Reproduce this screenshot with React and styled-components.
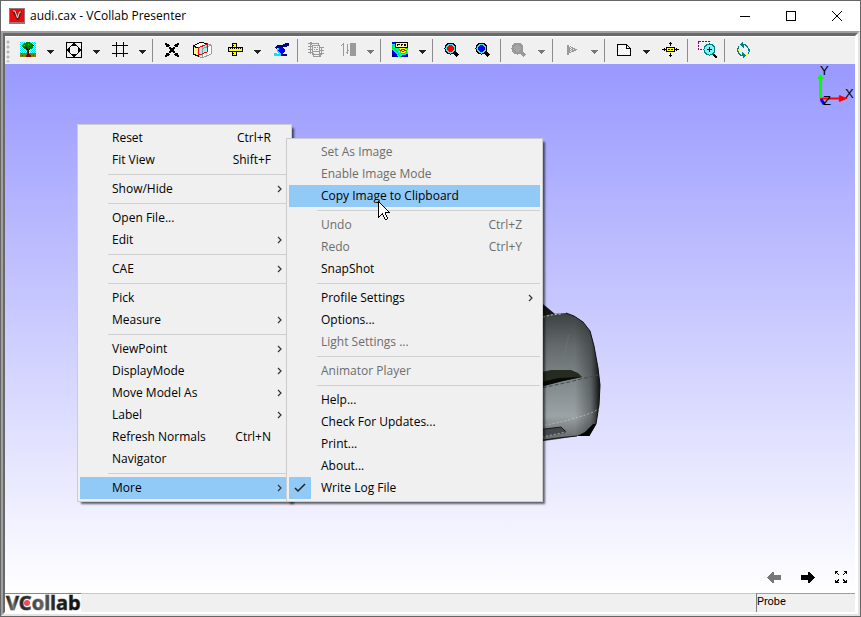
import React from "react";
import styled, { createGlobalStyle } from "styled-components";

const GlobalStyle = createGlobalStyle`
  *, *::before, *::after { box-sizing: border-box; }
  body { margin: 0; background: #fff; }
  button { margin: 0; padding: 0; border: 0; background: none; color: inherit; font: inherit; }
`;

const Window = styled.div`
  display: flex;
  flex-direction: column;
  min-height: 100vh;
  border: 1px solid #666;
  background: #fff;
  color: #000;
  font: 12px/16px "Open Sans", "Noto Sans", sans-serif;
`;

const TitleBar = styled.header`
  display: flex;
  align-items: center;
  height: 30px;
  padding-left: 8px;
`;

const Title = styled.h1`
  flex: 1;
  margin: 0 0 0 5px;
  font-size: 12px;
  font-weight: 400;
`;

const CaptionButton = styled.button`
  display: grid;
  place-items: center;
  width: 46px;
  height: 30px;
`;

const Frame = styled.div`
  flex: 1;
  display: flex;
  flex-direction: column;
  border: 2px solid;
  border-color: #a0a0a0 #e3e3e3 #e3e3e3 #a0a0a0;
`;

const Inner = styled.div`
  flex: 1;
  display: flex;
  flex-direction: column;
  border-style: solid;
  border-width: 3px 3px 2px 2px;
  border-color: #696969 #fff #fff #696969;
`;

const Toolbar = styled.div`
  display: flex;
  height: 28px;
  background: #f0f0f0;
  border-top: 1px solid #fff;
`;

const Grip = styled.div`
  width: 9px;
  margin: 3px 0 2px;
  background: radial-gradient(circle at 3px 2px, #b8b8b8 1px, transparent 2px) 0 0 / 9px 5px;
`;

const Group = styled.div`
  display: flex;
  align-items: flex-start;
  padding: 0 ${(p) => p.$end || 0}px 0 ${(p) => p.$start || 0}px;
`;

const Separator = styled.div`
  width: 1px;
  margin: 2px 0;
  background: #8c8c8c;
`;

const Tool = styled.button`
  display: flex;
  align-items: center;
  justify-content: center;
  width: ${(p) => p.$w || 28}px;
  height: 25px;
  margin-left: ${(p) => p.$gap || 0}px;
`;

const DropButton = styled.button`
  display: flex;
  align-items: center;
  width: 18px;
  height: 25px;
  padding: 4px 0 0 5px;
  color: ${(p) => (p.disabled ? "#777" : "#222")};
`;

const Viewport = styled.main`
  position: relative;
  flex: 1;
  min-height: 480px;
  overflow: hidden;
  background: linear-gradient(#9999ff, #ffffff);
`;

const CarLayer = styled.div`
  position: absolute;
  left: 532px;
  top: 236px;
`;

const AxisLayer = styled.div`
  position: absolute;
  top: 0;
  right: 0;
`;

const NavLayer = styled.div`
  position: absolute;
  right: 8px;
  bottom: 7px;
  display: flex;
  align-items: center;
  gap: 20px;
`;

const NavButton = styled.button`
  display: grid;
  place-items: center;
  height: 18px;
`;

const Menu = styled.div`
  position: absolute;
  left: ${(p) => p.$left}px;
  top: ${(p) => p.$top}px;
  width: ${(p) => p.$width}px;
  padding: 2px;
  border: 1px solid #ccc;
  background: #f0f0f0;
  box-shadow: 3px 3px 2px -1px rgba(0, 0, 0, 0.6);
`;

const Item = styled.button`
  display: grid;
  grid-template-columns: 22px 1fr auto 18px;
  align-items: center;
  width: 100%;
  height: 22px;
  text-align: left;
  white-space: nowrap;
  color: ${(p) => (p.disabled ? "#6d6d6d" : "#000")};
  background: ${(p) => (p.$active ? "#91c9f7" : "transparent")};
`;

const CheckCell = styled.span`
  display: grid;
  place-items: center;
  height: 22px;
  background: ${(p) => (p.$checked ? "#91c9f7" : "transparent")};
`;

const ItemLabel = styled.span`
  padding-left: 10px;
`;

const ArrowCell = styled.span`
  display: grid;
  place-items: center;
`;

const MenuRule = styled.hr`
  height: 1px;
  margin: 3px 0 3px 28px;
  border: 0;
  background: #d0d0d0;
`;

const CursorLayer = styled.div`
  position: absolute;
  left: 373px;
  top: 137px;
  pointer-events: none;
`;

const StatusBar = styled.footer`
  display: flex;
  height: 19px;
  background: #f0f0f0;
`;

const LogoCell = styled.div`
  width: 76px;
  height: 19px;
  background: #fff;
`;

const StatusMessage = styled.div`
  flex: 1;
  border-top: 1px solid #c8c8c8;
`;

const ProbeCell = styled.div`
  width: 99px;
  border-top: 1px solid #a0a0a0;
  border-left: 1px solid #808080;
  font: 11px/15px Roboto, "Liberation Sans", sans-serif;
`;

const Svg = styled.svg`
  display: block;
  flex: none;
`;

const LogoSvg = styled(Svg)`
  overflow: visible;
`;

const palette = {
  k: "#000", w: "#fff", r: "#f00", c: "#00e8f0", b: "#0000f0", n: "#000080", g: "#008000",
  m: "#800000", o: "#808000", y: "#ff0", l: "#00f000", e: "#9a9a9a", d: "#777", t: "#008080", p: "#800080",
  u: "#fff8a0", s: "#b8f4f4",
};

function Pixels({ rows }) {
  const cells = [];
  rows.forEach((row, y) => {
    let x = 0;
    while (x < row.length) {
      let end = x + 1;
      while (end < row.length && row[end] === row[x]) end += 1;
      if (row[x] !== ".") {
        cells.push(<rect key={`${x}-${y}`} x={x} y={y} width={end - x} height={1} fill={palette[row[x]]} />);
      }
      x = end;
    }
  });
  return (
    <Svg width={rows[0].length} height={rows.length} shapeRendering="crispEdges" aria-hidden="true">
      {cells}
    </Svg>
  );
}

const art = {
  tree: [
    "cwcwcwggggcwcwcw",
    "wcwcggggggggwcwc",
    "cwcggggglggggwcw",
    "wcgglggggggggkwc",
    "cwgggggggkgggwcw",
    "wcwggkmggggggcwc",
    "cwcwggmmgmggcwcw",
    "wcwcwcmmmmwcwcwc",
    "cwcwcwcmmwcwcwcw",
    "wcwcwcwmmcwcwcwc",
    "cwcwcwcmmwcwcwcw",
    "ooooooommooooooo",
    "ooooooommmoooooo",
    "oogooommmmmoogoo",
    "oooooommmmmooooo",
  ],
  fit: [
    "kkkkkkkkkkkkkkkk",
    "k......kk......k",
    "k.....kkkk.....k",
    "k....kkkkkk....k",
    "k...k......k...k",
    "k..k........k..k",
    "k.kk........kk.k",
    "kkkk........kkkk",
    "kkkk........kkkk",
    "k.kk........kk.k",
    "k..k........k..k",
    "k...k......k...k",
    "k....kkkkkk....k",
    "k.....kkkk.....k",
    "k......kk......k",
    "kkkkkkkkkkkkkkkk",
  ],
  grid: [
    "....k......k....",
    "....k......k....",
    "....k......k....",
    "kkkkkkkkkkkkkkkk",
    "....k......k....",
    "....k......k....",
    "....k......k....",
    "....k......k....",
    "....k......k....",
    "....k......k....",
    "....k......k....",
    "kkkkkkkkkkkkkkkk",
    "....k......k....",
    "....k......k....",
    "....k......k....",
  ],
  cross: [
    "kk..........kk",
    "kkkk......kkkk",
    ".kkkk....kkkk.",
    ".kkk......kkk.",
    "....kk..kk....",
    "....kkkkkk....",
    ".....kkkk.....",
    ".....kkkk.....",
    "....kkkkkk....",
    "....kk..kk....",
    ".kkk......kkk.",
    ".kkkk....kkkk.",
    "kkkk......kkkk",
    "kk..........kk",
  ],
  ruler: [
    "....kkkkk......",
    "....kyyyk......",
    "....kkyyk......",
    "....kyyyk......",
    "kkkkkkkkkkkkkkk",
    "kykykykykykykyk",
    "kyyyyyyyyyyyyyk",
    "kyyyyyyyyyyyyyk",
    "kkkkkkkkkkkkkkk",
    "....kyyyk......",
    "....kkyyk......",
    "....kyyyk......",
    "....kkkkk......",
  ],
  lamp: [
    "...........nnnn",
    ".........nnnnnn",
    "...nnnnnnnnnnnn",
    "..nnnnnnnnnnn..",
    ".nnnnnnnn......",
    "..n.cbbbbb.....",
    "...ccbbbbbb....",
    "...cbbbbbbb....",
    "...ccbbbbbb....",
    "....ccbbbb.....",
    "ccc..ccbb......",
    "cccccccnnnnnn..",
    "cccccccnnnnnn..",
  ],
  frame: [
    "..ee............",
    "eeeeeeeeeee.....",
    "..ee......e.....",
    "..e.eeeeeeee....",
    "eeeee......e....",
    "..e.e.ee.e.eeeee",
    "..e.e......e.e..",
    "eeeee.e.ee.e.e..",
    "..e.e......eeeee",
    "..e.eeeeeeee.e..",
    "eeeee......e.e..",
    "..e.ee.....eeeee",
    "....eeeeeeeeee..",
    ".....e.....ee...",
    ".....eeeeeeee...",
  ],
  levels: [
    "..e......eeeeee",
    ".ee...e..eeeeee",
    "e.e...e..eeeeee",
    "..e...e..eeeeee",
    "..e...e..eeeeee",
    "..e...e..eeeeee",
    "..e...e..eeeeee",
    "..e...ee.eeeeee",
    "..e...e..eeeeee",
    "..e..ee..eeeeee",
    "..e...e..eeeeee",
    "..e......eeeeee",
    "..e......eeeeee",
  ],
  fringe: [
    "bbbkkkkkkkkkkkkk",
    "bbbkuuuuuuuuuuuk",
    "ccckukkkukkukkuk",
    "lllkukuuukuukkuk",
    "lcckuuuuuuuuuuuk",
    "lcckkkkkkkkkkkkk",
    "lllccclyyyyyylll",
    "ccllccclyrrrryyl",
    "bccllcclrryyrrly",
    "bbccllcylyrryyly",
    "bbbcclcclyyyyllc",
    "nbbbcclccllllccc",
    "nnbbbclcccccccbb",
    "nnnbbcclccbbbbbb",
    "nnnnbbcclbbbbbbb",
  ],
  play: [
    "ee........",
    "ee.e......",
    "eee.ee....",
    "eeee.eee..",
    "eee.ee.eee",
    "eeee.eeee.",
    "eee.eee...",
    "eeee......",
    "ee........",
    "ee........",
  ],
  pan: [
    "........k........",
    ".......kkk.......",
    "........k........",
    "........k........",
    ".................",
    "....kkkkkkkkk....",
    "..k.kuyuyuyuk.k..",
    "kkkkkykkykkykkkkk",
    "..k.kuyuyuyuk.k..",
    "....kkkkkkkkk....",
    ".................",
    "........k........",
    "........k........",
    ".......kkk.......",
    "........k........",
  ],
  note: [
    "kkkkkkkkkk....",
    "kuwuwuwuwkk...",
    "kwuwuwuwukuk..",
    "kuwuwuwuwkwuk.",
    "kwuwuwuwukkkkk",
    "kuwuwuwuwuwuwk",
    "kwuwuwuwuwuwuk",
    "kuwuwuwuwuwuwk",
    "kwuwuwuwuwuwuk",
    "kuwuwuwuwuwuwk",
    "kwuwuwuwuwuwuk",
    "kkkkkkkkkkkkkk",
  ],
  refresh: [
    ".....t.......",
    "....tt.......",
    "...tttttt....",
    "..yyttt.tt...",
    ".ty..tt..tt..",
    ".t....t...ty.",
    "tt.........t.",
    "ty.........tt",
    "ty.........tt",
    "tt.........yt",
    ".t...t.....t.",
    ".tt..tty..yt.",
    "..tt.tttyyy..",
    "...tttttt....",
    "......tt.....",
    "......t......",
  ],
  cursor: [
    "k...........",
    "kk..........",
    "kwk.........",
    "kwwk........",
    "kwwwk.......",
    "kwwwwk......",
    "kwwwwwk.....",
    "kwwwwwwk....",
    "kwwwwwwwk...",
    "kwwwwwwwwk..",
    "kwwwwwwwwwk.",
    "kwwwwwwkkkkk",
    "kwwwkwwk....",
    "kwwkkwwk....",
    "kwk..kwwk...",
    "kk...kwwk...",
    "k.....kwwk..",
    "......kwwk..",
    ".......kk...",
  ],
  back: [
    ".....dd.......",
    "....ddd.......",
    "...dddd.......",
    "..dddddddddddd",
    ".ddddddddddddd",
    "dddddddddddddd",
    ".ddddddddddddd",
    "..dddddddddddd",
    "...dddd.......",
    "....ddd.......",
    ".....dd.......",
  ],
  expand: [
    "kkk......kkk",
    "kk........kk",
    "k.k......k.k",
    "...k....k...",
    "............",
    "............",
    "............",
    "............",
    "...k....k...",
    "k.kk....kk.k",
    "kkk......kkk",
    "kkkk....kkkk",
  ],
};
art.forward = art.back.map((row) => row.split("").reverse().join("").replaceAll("d", "k"));

function Magnifier({ ring, center, edge = "#000" }) {
  return (
    <Svg width="16" height="16" shapeRendering="crispEdges" aria-hidden="true">
      <path d="M10 10L14 14" stroke={edge} strokeWidth="3" />
      <circle cx="6.5" cy="6.5" r="5.5" fill={ring} stroke={edge} />
      <circle cx="6.5" cy="6.5" r="3.3" fill={center} />
    </Svg>
  );
}

function CubeIcon() {
  return (
    <Svg width="20" height="18" shapeRendering="crispEdges" aria-hidden="true">
      <path d="M1 5L9 1L19 4V13L10 17L1 13Z" fill="#fff" stroke="#999" />
      <path d="M1 5L6 7V15L1 13Z" fill="#fff59a" stroke="#000" />
      <path d="M1 5L9 1L15 3" fill="none" stroke="#000" />
      <path d="M6 7L15 3V11L7 14Z" fill="#9beef2" />
      <path d="M10 8V17M10 8L19 4" fill="none" stroke="#999" />
      <path d="M6 7L15 3V11L7 14Z" fill="none" stroke="#f00" />
    </Svg>
  );
}

function ZoomWindowIcon() {
  return (
    <Svg width="20" height="18" shapeRendering="crispEdges" aria-hidden="true">
      <rect x="0.5" y="0.5" width="11" height="8" fill="none" stroke="#800080" strokeDasharray="2 1" />
      <path d="M15 13L19 17" stroke="#000" strokeWidth="2" />
      <circle cx="11.5" cy="8.5" r="5.5" fill="#80f0f4" stroke="#008080" />
      <path d="M9 8.5H14M11.5 6V11" stroke="#000" />
    </Svg>
  );
}

function CaretIcon() {
  return (
    <Svg width="7" height="4" shapeRendering="crispEdges" aria-hidden="true">
      <path d="M0 0H7V1H6V2H5V3H4V4H3V3H2V2H1V1H0Z" fill="currentColor" />
    </Svg>
  );
}

function AppIcon() {
  return (
    <Svg width="16" height="16" aria-hidden="true">
      <rect width="16" height="16" fill="#9b7777" />
      <rect x="1" y="1" width="14" height="13" fill="#f20808" />
      <path d="M3 3H7L9 9L11 3H13L10 12H8Z" fill="#5a2020" />
      <path d="M4 3H6L8.5 10L10.5 4H12" fill="none" stroke="#ddd" />
    </Svg>
  );
}

function Car() {
  const shell = "M538 317L553 314L567 313L575 316L584 322L591 331L595 346L599 368L601 385L600 405L597 424L590 436L577 436L560 439L538 442Z";
  return (
    <Svg width="66" height="144" viewBox="538 300 66 144" aria-label="Car model" role="img">
      <defs>
        <linearGradient id="body" x1="0" y1="0" x2="0" y2="1">
          <stop offset="0" stopColor="#3b4041" />
          <stop offset="0.25" stopColor="#646a6c" />
          <stop offset="0.55" stopColor="#838a8d" />
          <stop offset="0.8" stopColor="#9ca3a6" />
          <stop offset="1" stopColor="#5b6163" />
        </linearGradient>
        <linearGradient id="side" x1="0" y1="0" x2="1" y2="0">
          <stop offset="0.6" stopColor="#202425" stopOpacity="0" />
          <stop offset="0.85" stopColor="#202425" stopOpacity="0.4" />
          <stop offset="1" stopColor="#080808" stopOpacity="0.95" />
        </linearGradient>
      </defs>
      <path d="M538 302L544 304L556 314L538 318Z" fill="#161818" />
      <path d={shell} fill="url(#body)" />
      <path d={shell} fill="url(#side)" />
      <path d="M567 313L575 316L584 322L591 331L595 346L599 368L601 385L600 405L597 424L590 436" fill="none" stroke="#111" />
      <path d="M578 436L586 432L594 424L597 424L590 436Z" fill="#050505" />
      <path d="M538 373L552 370L572 370L579 373L583 377L564 381L538 387Z" fill="#252b20" />
      <path d="M538 383L560 378L583 377L564 381L538 388Z" fill="#080a06" />
      <path d="M570 334C567 347 566 354 564 362" fill="none" stroke="#7d8587" opacity="0.3" />
      <path d="M538 389L570 382L586 378L599 375" fill="none" stroke="#454a4b" strokeDasharray="4 2" />
      <path d="M538 427L566 421L583 416L592 413L600 409" fill="none" stroke="#c4caca" strokeDasharray="2 2" opacity="0.7" />
      <path d="M544 317L552 315L562 314" fill="none" stroke="#bbb" strokeDasharray="2 2" />
      <path d="M538 430L562 427L567 431V433L538 438Z" fill="#44494c" />
      <path d="M538 430L562 427L567 432" fill="none" stroke="#171919" />
      <path d="M543 437L567 432" stroke="#aaa" strokeDasharray="2 2" />
      <path d="M538 441L559 438L578 436" fill="none" stroke="#111" />
    </Svg>
  );
}

function Axes() {
  return (
    <Svg width="38" height="44" role="img" aria-label="Axis triad" fontFamily="Liberation Sans, sans-serif" fontSize="13">
      <path d="M3 34.5H26M22 32L28 34.5L22 37" stroke="#f00" strokeWidth="2" fill="#f00" />
      <path d="M4 35L7 40" stroke="#00f" strokeWidth="3" />
      <path d="M3.5 34V13" stroke="#0f0" strokeWidth="3" />
      <path d="M3.500 10L7 15H0Z" fill="#0f0" />
      <text x="3" y="11">Y</text>
      <text x="28" y="34">X</text>
      <text x="6" y="41">Z</text>
    </Svg>
  );
}

function Logo() {
  return (
    <LogoSvg width="76" height="19" role="img" aria-label="VCollab">
      <defs>
        <linearGradient id="metal" x1="0" y1="0" x2="1" y2="0">
          <stop offset="0" stopColor="#111" />
          <stop offset="0.1" stopColor="#777" />
          <stop offset="0.15" stopColor="#222" />
          <stop offset="0.3" stopColor="#333" />
          <stop offset="0.5" stopColor="#666" />
          <stop offset="0.65" stopColor="#222" />
          <stop offset="1" stopColor="#111" />
        </linearGradient>
      </defs>
      <path d="M0 0.5H76" stroke="#888" />
      <text x="1" y="17" fontFamily="Noto Sans, sans-serif" fontSize="20" fontWeight="700" fill="url(#metal)" stroke="#999" strokeWidth="1" paintOrder="stroke">VCollab</text>
      <circle cx="22" cy="10" r="3" fill="#f04a55" />
    </LogoSvg>
  );
}

const RULE = "rule";

const mainMenu = [
  { label: "Reset", keys: "Ctrl+R" },
  { label: "Fit View", keys: "Shift+F" },
  RULE,
  { label: "Show/Hide", sub: true },
  RULE,
  { label: "Open File..." },
  { label: "Edit", sub: true },
  RULE,
  { label: "CAE", sub: true },
  RULE,
  { label: "Pick" },
  { label: "Measure", sub: true },
  RULE,
  { label: "ViewPoint", sub: true },
  { label: "DisplayMode", sub: true },
  { label: "Move Model As", sub: true },
  { label: "Label", sub: true },
  { label: "Refresh Normals", keys: "Ctrl+N" },
  { label: "Navigator" },
  RULE,
  { label: "More", sub: true, active: true },
];

const moreMenu = [
  { label: "Set As Image", disabled: true },
  { label: "Enable Image Mode", disabled: true },
  { label: "Copy Image to Clipboard", active: true },
  RULE,
  { label: "Undo", keys: "Ctrl+Z", disabled: true },
  { label: "Redo", keys: "Ctrl+Y", disabled: true },
  { label: "SnapShot" },
  RULE,
  { label: "Profile Settings", sub: true },
  { label: "Options..." },
  { label: "Light Settings ...", disabled: true },
  RULE,
  { label: "Animator Player", disabled: true },
  RULE,
  { label: "Help..." },
  { label: "Check For Updates..." },
  { label: "Print..." },
  { label: "About..." },
  { label: "Write Log File", checked: true },
];

function MenuItem({ label, keys, sub, active, disabled, checked }) {
  return (
    <Item
      type="button"
      role={checked ? "menuitemcheckbox" : "menuitem"}
      aria-checked={checked}
      aria-haspopup={sub ? "menu" : undefined}
      disabled={disabled}
      $active={active}
    >
      <CheckCell $checked={checked}>
        {checked && (
          <Svg width="12" height="10" aria-hidden="true">
            <path d="M1 5L4 8L11 1" fill="none" stroke="#222" strokeWidth="1.5" />
          </Svg>
        )}
      </CheckCell>
      <ItemLabel>{label}</ItemLabel>
      <span>{keys}</span>
      <ArrowCell>
        {sub && (
          <Svg width="8" height="8" aria-hidden="true">
            <path d="M2 1L5 4L2 7" fill="none" stroke="#333" strokeWidth="1.2" />
          </Svg>
        )}
      </ArrowCell>
    </Item>
  );
}

function PopupMenu({ name, items, left, top, width }) {
  return (
    <Menu role="menu" aria-label={name} $left={left} $top={top} $width={width}>
      {items.map((item, i) => (item === RULE ? <MenuRule key={i} /> : <MenuItem key={item.label} {...item} />))}
    </Menu>
  );
}

function IconTool({ name, children, ...rest }) {
  return <Tool type="button" aria-label={name} {...rest}>{children}</Tool>;
}

function SplitTool({ name, children, disabled, $gap }) {
  return (
    <>
      <IconTool name={name} disabled={disabled} $gap={$gap}>{children}</IconTool>
      <DropButton type="button" aria-label={`${name} options`} disabled={disabled}><CaretIcon /></DropButton>
    </>
  );
}

export default function App() {
  return (
    <>
      <GlobalStyle />
      <Window>
        <TitleBar>
          <AppIcon />
          <Title>audi.cax - VCollab Presenter</Title>
          <CaptionButton type="button" aria-label="Minimize">
            <Svg width="10" height="10"><path d="M0 5.5H10" stroke="#000" /></Svg>
          </CaptionButton>
          <CaptionButton type="button" aria-label="Maximize">
            <Svg width="10" height="10"><rect x="0.5" y="0.5" width="9" height="9" fill="none" stroke="#000" /></Svg>
          </CaptionButton>
          <CaptionButton type="button" aria-label="Close">
            <Svg width="10" height="10"><path d="M0 0L10 10M10 0L0 10" stroke="#000" /></Svg>
          </CaptionButton>
        </TitleBar>
        <Frame>
          <Inner>
            <Toolbar role="toolbar" aria-label="Main toolbar">
              <Grip />
              <Group>
                <SplitTool name="Background"><Pixels rows={art.tree} /></SplitTool>
                <SplitTool name="Fit view"><Pixels rows={art.fit} /></SplitTool>
                <SplitTool name="Grid"><Pixels rows={art.grid} /></SplitTool>
              </Group>
              <Separator />
              <Group $start={4} $end={2}>
                <IconTool name="Explode" $w={30}><Pixels rows={art.cross} /></IconTool>
                <IconTool name="Section" $w={30}><CubeIcon /></IconTool>
                <SplitTool name="Measure" $gap={4}><Pixels rows={art.ruler} /></SplitTool>
                <IconTool name="Light"><Pixels rows={art.lamp} /></IconTool>
              </Group>
              <Separator />
              <Group $start={4}>
                <IconTool name="Animate" disabled><Pixels rows={art.frame} /></IconTool>
                <SplitTool name="Levels" disabled $gap={4}><Pixels rows={art.levels} /></SplitTool>
              </Group>
              <Separator />
              <Group $start={5}>
                <SplitTool name="Contour"><Pixels rows={art.fringe} /></SplitTool>
              </Group>
              <Separator />
              <Group $start={3} $end={2}>
                <IconTool name="Probe maximum" $w={31}><Magnifier ring="#40e0e4" center="#f00" /></IconTool>
                <IconTool name="Probe minimum" $w={31}><Magnifier ring="#40e0e4" center="#00f" /></IconTool>
              </Group>
              <Separator />
              <Group $start={4} $end={1}>
                <SplitTool name="Find" disabled><Magnifier ring="#999" center="#a4a4a4" edge="#999" /></SplitTool>
              </Group>
              <Separator />
              <Group $start={5}>
                <SplitTool name="Play" disabled><Pixels rows={art.play} /></SplitTool>
              </Group>
              <Separator />
              <Group $start={5} $end={3}>
                <SplitTool name="Notes"><Pixels rows={art.note} /></SplitTool>
                <IconTool name="Pan"><Pixels rows={art.pan} /></IconTool>
              </Group>
              <Separator />
              <Group $start={6} $end={2}>
                <IconTool name="Zoom window"><ZoomWindowIcon /></IconTool>
              </Group>
              <Separator />
              <Group $start={4}>
                <IconTool name="Refresh"><Pixels rows={art.refresh} /></IconTool>
              </Group>
            </Toolbar>
            <Viewport>
              <CarLayer><Car /></CarLayer>
              <AxisLayer><Axes /></AxisLayer>
              <NavLayer>
                <NavButton type="button" aria-label="Previous" disabled><Pixels rows={art.back} /></NavButton>
                <NavButton type="button" aria-label="Next"><Pixels rows={art.forward} /></NavButton>
                <NavButton type="button" aria-label="Full screen"><Pixels rows={art.expand} /></NavButton>
              </NavLayer>
              <PopupMenu name="Context menu" items={mainMenu} left={72} top={60} width={215} />
              <PopupMenu name="More" items={moreMenu} left={281} top={74} width={257} />
              <CursorLayer><Pixels rows={art.cursor} /></CursorLayer>
            </Viewport>
            <StatusBar>
              <LogoCell><Logo /></LogoCell>
              <StatusMessage />
              <ProbeCell>Probe</ProbeCell>
            </StatusBar>
          </Inner>
        </Frame>
      </Window>
    </>
  );
}
